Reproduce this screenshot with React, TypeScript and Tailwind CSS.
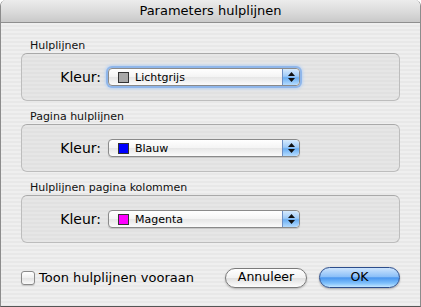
import React from 'react';

const font = { fontFamily: '"Lucida Grande", "DejaVu Sans", sans-serif' };

function Stepper() {
  return (
    <div className="flex h-full w-[17px] flex-col items-center justify-center gap-[2px] rounded-r-[4px] border-l border-[#6d8fc4] bg-[linear-gradient(to_bottom,#d6eafd_0%,#9fcbf8_45%,#6aaef2_55%,#b5dcff_100%)]">
      <svg width="7" height="4" viewBox="0 0 7 4">
        <path d="M3.5 0 L7 4 L0 4 Z" fill="#111" />
      </svg>
      <svg width="7" height="4" viewBox="0 0 7 4">
        <path d="M0 0 L7 0 L3.5 4 Z" fill="#111" />
      </svg>
    </div>
  );
}

function Popup({ swatch, label, focused }: { swatch: string; label: string; focused?: boolean }) {
  return (
    <div
      className={`flex h-[18px] w-[192px] items-center overflow-hidden rounded-[4px] border border-[#8a8a8a] bg-[linear-gradient(to_bottom,#ffffff_0%,#f4f4f4_50%,#e6e6e6_51%,#fbfbfb_100%)] ${
        focused ? 'shadow-[0_0_0_2px_#8fb6ea,0_0_3px_3px_#b9d3f4]' : 'shadow-[0_1px_1px_rgba(0,0,0,0.15)]'
      }`}
    >
      <div className="ml-[9px] h-[11px] w-[11px] border border-[#333]" style={{ backgroundColor: swatch }} />
      <span className="ml-[6px] flex-1 text-[11px] leading-none text-black">{label}</span>
      <Stepper />
    </div>
  );
}

function Group({ title, swatch, label, focused }: { title: string; swatch: string; label: string; focused?: boolean }) {
  return (
    <div className="flex flex-col">
      <div className="pl-[9px] text-[11px] leading-[13px] text-[#111]">{title}</div>
      <div className="mt-[1px] flex h-[48px] items-center rounded-[6px] border border-[#bdbdbd] border-t-[#a9a9a9] bg-[repeating-linear-gradient(to_bottom,#e6e6e6_0px,#e6e6e6_2px,#e1e1e1_2px,#e1e1e1_4px)]">
        <div className="w-[79px] text-right text-[14px] leading-none text-black">Kleur:</div>
        <div className="ml-[7px]">
          <Popup swatch={swatch} label={label} focused={focused} />
        </div>
      </div>
    </div>
  );
}

export default function App() {
  return (
    <div className="h-[307px] w-[421px] bg-white" style={font}>
      <div className="flex h-[307px] w-[421px] flex-col overflow-hidden rounded-t-[6px] border-x border-b border-[#8c8c8c] border-b-[#555]">
        <div className="flex h-[23px] shrink-0 items-center justify-center border-b border-[#8e8e8e] bg-[linear-gradient(to_bottom,#ececec_0%,#dcdcdc_50%,#c9c9c9_100%)] text-[13px] text-black">
          Parameters hulplijnen
        </div>
        <div className="flex flex-1 flex-col bg-[repeating-linear-gradient(to_bottom,#efefef_0px,#efefef_2px,#e8e8e8_2px,#e8e8e8_4px)] px-[20px] pt-[16px]">
          <div className="flex flex-col gap-[9px]">
            <Group title="Hulplijnen" swatch="#a8a8a8" label="Lichtgrijs" focused />
            <Group title="Pagina hulplijnen" swatch="#0000ff" label="Blauw" />
            <Group title="Hulplijnen pagina kolommen" swatch="#ff00ff" label="Magenta" />
          </div>
          <div className="mt-[24px] flex items-center">
            <div className="flex items-center">
              <div className="h-[14px] w-[14px] rounded-[3px] border border-[#8a8a8a] bg-[linear-gradient(to_bottom,#ffffff_0%,#eeeeee_50%,#e2e2e2_51%,#fafafa_100%)] shadow-[0_1px_1px_rgba(0,0,0,0.15)]" />
              <span className="ml-[4px] text-[13px] leading-none text-black">Toon hulplijnen vooraan</span>
            </div>
            <div className="ml-auto flex items-center gap-[12px]">
              <button className="flex h-[20px] w-[82px] items-center justify-center rounded-full border border-[#7a7a7a] bg-[linear-gradient(to_bottom,#ffffff_0%,#f2f2f2_50%,#e0e0e0_51%,#fdfdfd_100%)] text-[12.5px] leading-none text-black shadow-[0_1px_2px_rgba(0,0,0,0.25)]">
                Annuleer
              </button>
              <button className="flex h-[21px] w-[81px] items-center justify-center rounded-full border border-[#2d4e8c] bg-[linear-gradient(to_bottom,#cde4fd_0%,#8cc0f8_45%,#4a96ee_52%,#7fc0fb_80%,#c3e6ff_100%)] text-[12.5px] leading-none text-black shadow-[0_1px_2px_rgba(0,0,0,0.3)]">
                OK
              </button>
            </div>
          </div>
        </div>
      </div>
    </div>
  );
}
